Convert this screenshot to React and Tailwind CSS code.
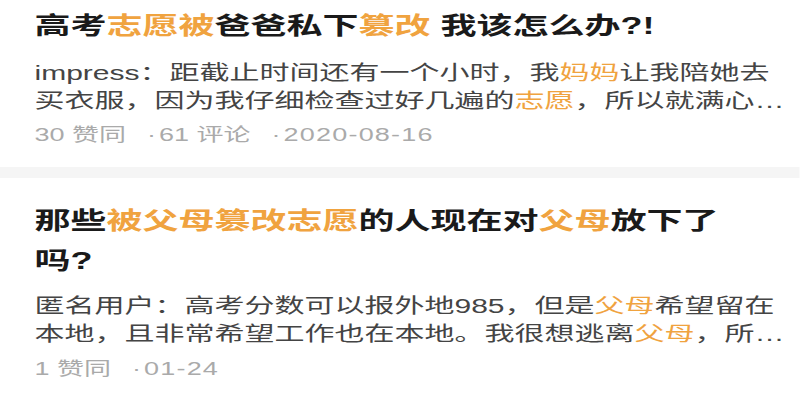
import React from "react";

const O = ({ children }) => <span className="text-[#f0a33f]">{children}</span>;

const Dot = () => <span className="ml-[14px] mr-[2px]">·</span>;

export default function App() {
  return (
    <div className="w-[800px] h-[400px] overflow-hidden bg-white">
      <div
        className="w-[533px] origin-left scale-x-150 bg-white"
        style={{ fontFamily: '"Liberation Sans", "Noto Sans CJK SC", sans-serif' }}
      >
        <div className="pl-[23px] pr-[5px] pt-[6px] pb-[20px]">
          <h2 className="pr-[30px] text-[24px] leading-[40px] font-bold text-[#1a1a1a]">
            高考<O>志愿被</O>爸爸私下<O>篡改</O> 我该怎么办?!
          </h2>
          <p className="mt-[13px] text-[20px] leading-[28px] text-[#444444]">
            impress：距截止时间还有一个小时，我<O>妈妈</O>让我陪她去买衣服，因为我仔细检查过好几遍的<O>志愿</O>，所以就满心…
          </p>
          <div className="mt-[8px] text-[18px] leading-[24px] text-[#aaaaaa]">
            30 赞同<Dot />61 评论<Dot /><span className="tracking-[0.8px]">2020-08-16</span>
          </div>
        </div>
        <div className="h-[11px] bg-[#f5f5f5]" />
        <div className="pl-[23px] pr-[5px] pt-[23px] pb-[20px]">
          <h2 className="pr-[30px] text-[24px] leading-[40px] font-bold text-[#1a1a1a]">
            那些<O>被父母篡改志愿</O>的人现在对<O>父母</O>放下了吗?
          </h2>
          <p className="mt-[11px] text-[20px] leading-[28px] text-[#444444]">
            匿名用户：高考分数可以报外地985，但是<O>父母</O>希望留在本地，且非常希望工作也在本地。我很想逃离<O>父母</O>，所…
          </p>
          <div className="mt-[9px] text-[18px] leading-[24px] text-[#aaaaaa]">
            1 赞同<Dot /><span className="tracking-[0.8px]">01-24</span>
          </div>
        </div>
      </div>
    </div>
  );
}
